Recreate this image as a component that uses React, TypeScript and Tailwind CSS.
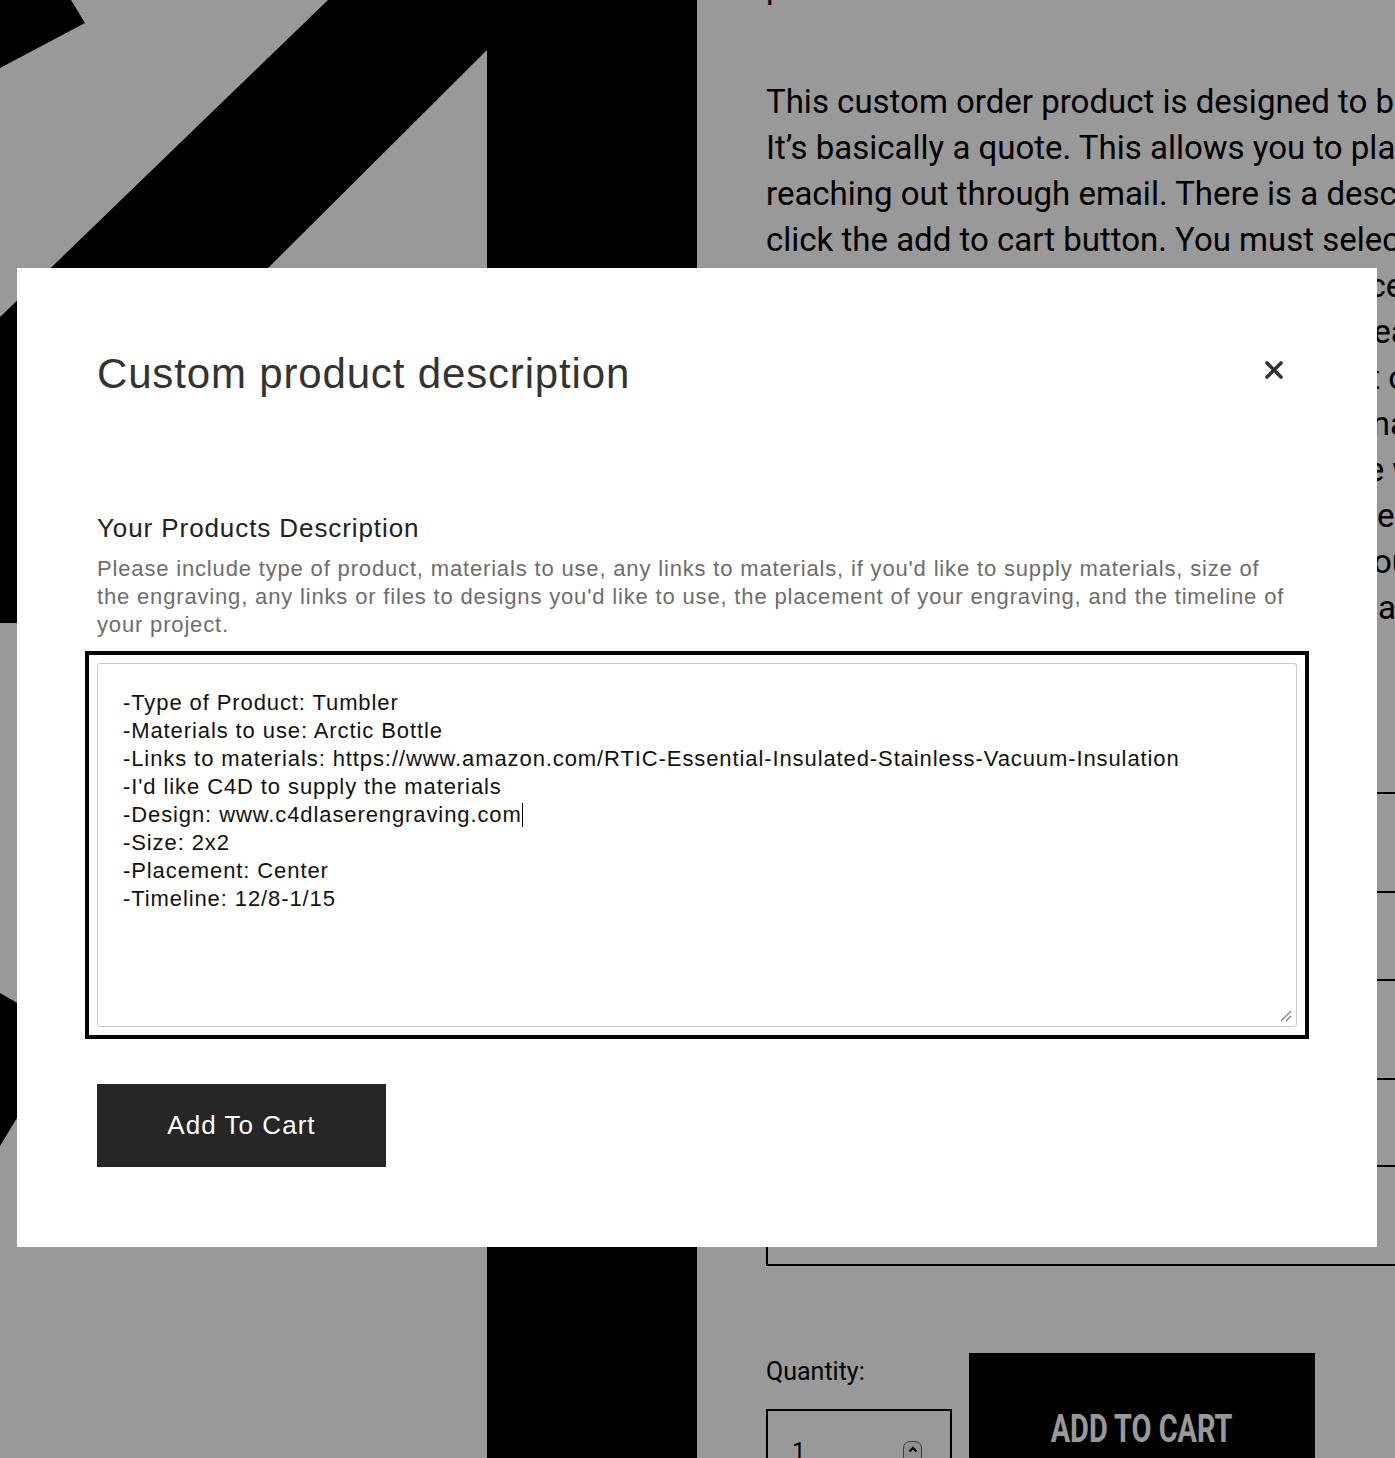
import React from "react";

const paragraph = [
  "This custom order product is designed to be used for larger projects.",
  "It’s basically a quote. This allows you to place an order without",
  "reaching out through email. There is a description box after you",
  "click the add to cart button. You must select the options for your",
  "project before checking out so we can price the item correctly. Once",
  "your order is placed we will review it and reach out with any questions",
  "about the finished look and the placement of your design on each",
  "product. We will send you a proof of the final look and you will be",
  "able to approve or request changes before we begin. Please note that",
  "turnaround time depends on the size of the order and the type of",
  "materials. Shipping is calculated at checkout. If you have questions,",
  "please contact us before ordering so we can answer any of your questions.",
];

const entry = [
  "-Type of Product: Tumbler",
  "-Materials to use: Arctic Bottle",
  "-Links to materials: https://www.amazon.com/RTIC-Essential-Insulated-Stainless-Vacuum-Insulation",
  "-I'd like C4D to supply the materials",
];

const entryRest = ["-Size: 2x2", "-Placement: Center", "-Timeline: 12/8-1/15"];

const helpLines = [
  "Please include type of product, materials to use, any links to materials, if you'd like to supply materials, size of",
  "the engraving, any links or files to designs you'd like to use, the placement of your engraving, and the timeline of",
  "your project.",
];

function ArtPanel() {
  return (
    <div className="w-[697px] h-[1458px] shrink-0 bg-white">
      <svg width="697" height="1458" viewBox="0 0 697 1458" className="block">
        <polygon points="0,0 71,0 85,23 0,68" fill="#000" />
        <polygon
          points="328,0 697,0 697,1458 487,1458 487,50 268,268 40,560 40,623 0,623 0,317"
          fill="#000"
        />
        <polygon points="0,993 40,1016 40,1080 0,1146" fill="#000" />
      </svg>
    </div>
  );
}

function ProductColumn() {
  return (
    <div
      className="pl-[69px] w-[698px] shrink-0 flex flex-col text-black"
      style={{ fontFamily: "Roboto, 'Liberation Sans', sans-serif" }}
    >
      <div className="mt-[-36px] h-[46px] text-[33px] leading-[46px] whitespace-nowrap">
        pieces. Custom
      </div>
      <div className="mt-[69px] text-[33px] leading-[46px]">
        {paragraph.map((line) => (
          <div key={line} className="whitespace-nowrap">
            {line}
          </div>
        ))}
      </div>
      <div className="mt-[161px] w-[760px] flex flex-col">
        <div className="h-[2px] bg-black" />
        <div className="h-[99px] border-b-2 border-black" />
        <div className="h-[88px] border-b-2 border-black" />
        <div className="h-[99px] border-b-2 border-black" />
        <div className="h-[87px] border-b-2 border-black" />
        <div className="h-[99px] border-2 border-black border-t-0" />
      </div>
      <div className="mt-[87px] flex items-start gap-[17px]">
        <div className="w-[186px] flex flex-col">
          <div className="mt-[4px] h-[30px] text-[25px] leading-[30px]">Quantity:</div>
          <div className="mt-[22px] h-[80px] border-2 border-black flex items-start justify-between pl-[24px] pr-[28px] pt-[26px]">
            <span className="text-[24px] leading-[28px]">1</span>
            <span className="mt-[4px] w-[19px] h-[24px] rounded-[7px] border border-[#666] bg-[#eee] flex items-start justify-center pt-[4px]">
              <svg width="10" height="7" viewBox="0 0 10 7">
                <path d="M1.5 5.5 L5 2 L8.5 5.5" fill="none" stroke="#000" strokeWidth="2" />
              </svg>
            </span>
          </div>
        </div>
        <div className="w-[346px] h-[120px] bg-black flex items-start justify-center pt-[56px]">
          <span className="text-white text-[38px] leading-[40px] font-bold scale-x-[0.76] whitespace-nowrap">
            ADD TO CART
          </span>
        </div>
      </div>
    </div>
  );
}

function CloseIcon() {
  return (
    <svg width="20" height="20" viewBox="0 0 20 20">
      <path d="M3 3 L17 17 M17 3 L3 17" stroke="#333" strokeWidth="3.6" strokeLinecap="round" />
    </svg>
  );
}

function DescriptionModal() {
  return (
    <div
      className="absolute left-[17px] top-[268px] w-[1360px] h-[979px] bg-white px-[80px] pt-[81px] flex flex-col"
      style={{ fontFamily: "'Liberation Sans', Arial, Helvetica, sans-serif" }}
    >
      <div className="flex items-start justify-between">
        <h2 className="text-[42px] leading-[50px] tracking-[0.02em] text-[#333]">Custom product description</h2>
        <button className="mt-[11px] mr-[13px] w-[20px] h-[20px] flex items-center justify-center">
          <CloseIcon />
        </button>
      </div>
      <div className="mt-[113px] text-[26px] leading-[32px] tracking-[0.035em] text-[#222]">
        Your Products Description
      </div>
      <p className="mt-[11px] text-[22px] leading-[28px] tracking-[0.038em] text-[#6d6d6d]">
        {helpLines.map((line) => (
          <span key={line} className="block whitespace-nowrap">
            {line}
          </span>
        ))}
      </p>
      {/* focus ring drawn as a square frame around the field */}
      <div className="mt-[12px] -mx-[12px] border-4 border-black p-[8px]">
        <div className="relative h-[364px] rounded-[3px] border border-[#c9c9c9] pl-[25px] pt-[25px] text-[22px] leading-[28px] tracking-[0.041em] text-[#111]">
          {entry.map((line) => (
            <div key={line} className="whitespace-nowrap">
              {line}
            </div>
          ))}
          <div className="whitespace-nowrap flex items-center">
            -Design: www.c4dlaserengraving.com
            <span className="inline-block w-[1px] h-[24px] bg-black" />
          </div>
          {entryRest.map((line) => (
            <div key={line} className="whitespace-nowrap">
              {line}
            </div>
          ))}
          <svg width="14" height="14" viewBox="0 0 14 14" className="absolute right-[3px] bottom-[3px]">
            <path d="M2 12 L12 2 M7 12 L12 7" stroke="#888" strokeWidth="1.4" />
          </svg>
        </div>
      </div>
      <button className="mt-[45px] w-[289px] h-[83px] bg-[#262626] text-white text-[26px] tracking-[0.04em] flex items-center justify-center">
        Add To Cart
      </button>
    </div>
  );
}

export default function App() {
  return (
    <div className="relative w-[1395px] h-[1458px] overflow-hidden bg-white">
      <div className="flex">
        <ArtPanel />
        <ProductColumn />
      </div>
      <div className="absolute inset-0 bg-black/40" />
      <DescriptionModal />
    </div>
  );
}
